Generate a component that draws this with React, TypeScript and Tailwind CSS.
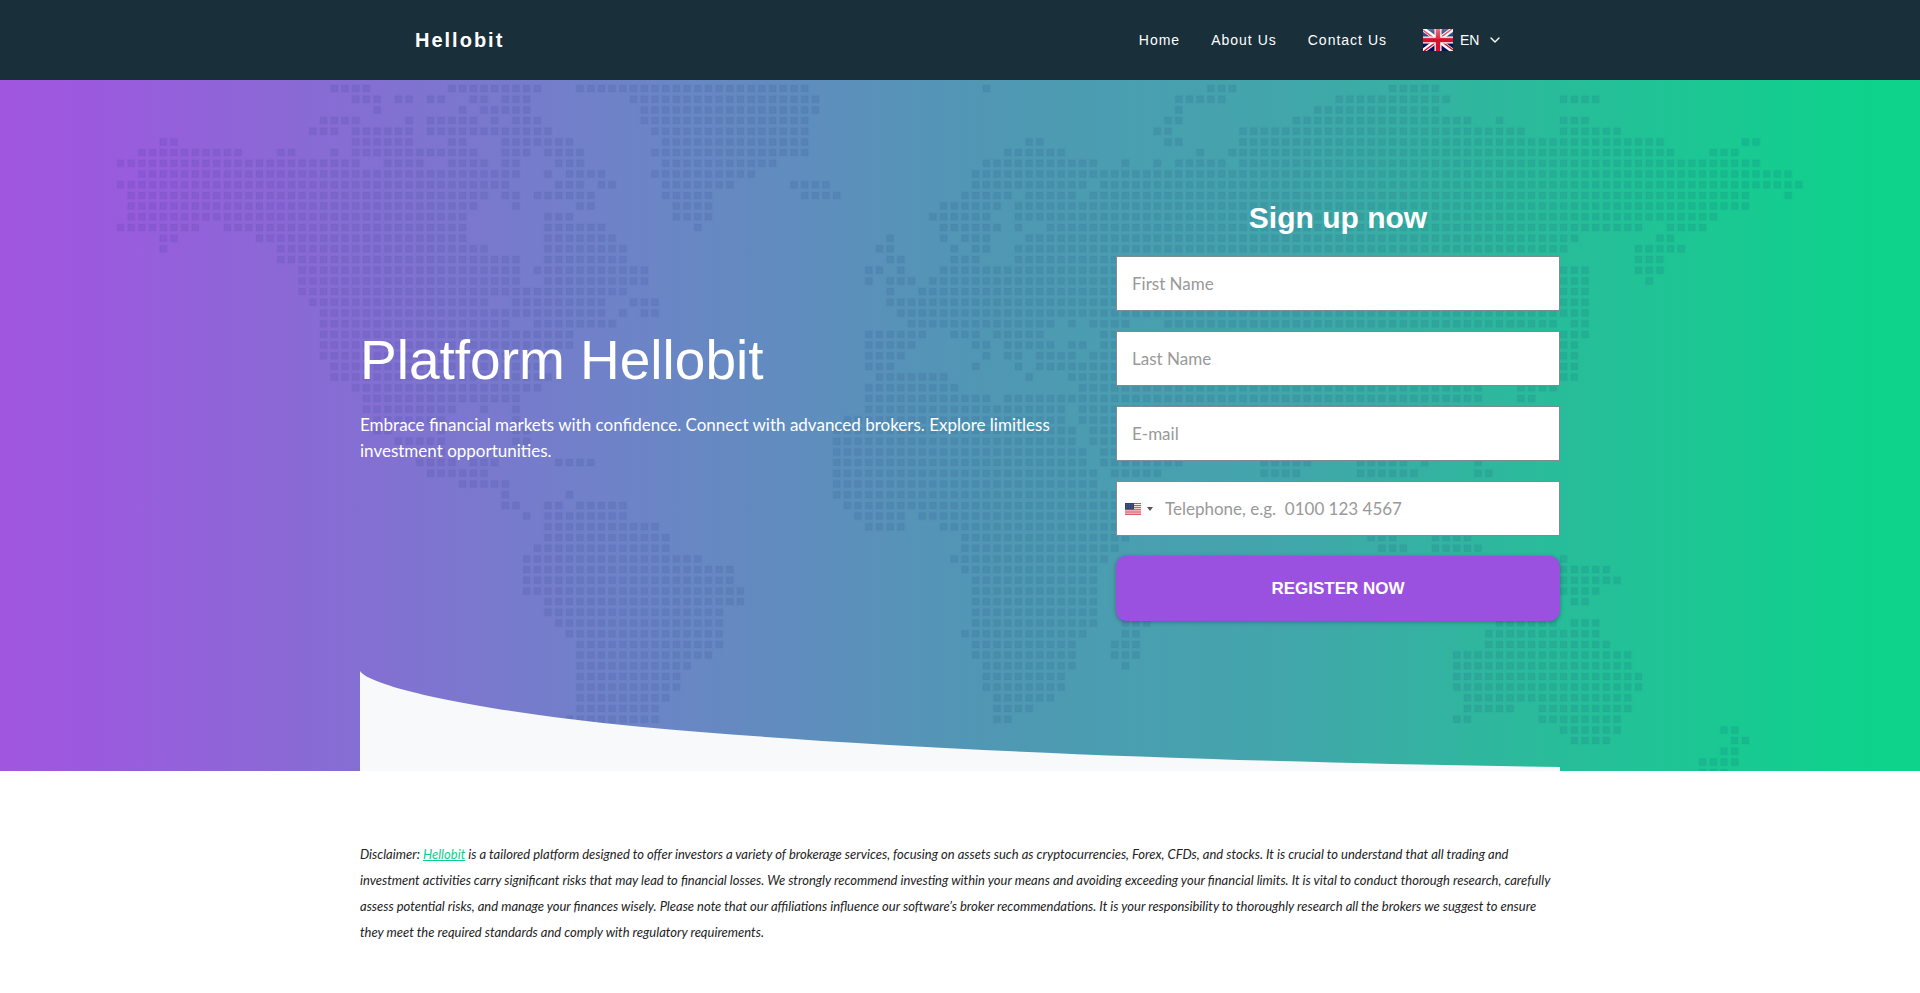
import { ChevronDown } from "lucide-react";

// Land cells of the dotted world map, one string per row, written as column ranges
const MAP_ROWS = [
  "20-23 31-39 43-64 81 102-104 119-123",
  "22-24 26-27 29-30 33-34 36-38 48-65 99-103 114-124 135-138",
  "24 32 34-38 49-65 99 112-123",
  "19-22 27 29-33 35 37-39 49-64 98-99 110-126 129 135-137",
  "18-20 22-27 29-33 34-40 50-64 97-98 105-131 135-140",
  "4-5 22-27 31-32 36-42 51-64 85-86 98-99 105-144 152-153",
  "2-11 15-16 20 22-33 36-38 40-43 50-64 83-88 101 104-145 149-151",
  "0-22 25-28 31-34 36-37 41-43 51-61 81-91 94 97 99-103 105-153",
  "2-37 40 42-45 50-59 80-156",
  "0-36 41-43 45-46 51-57 63-66 80-90 92-157",
  "1-34 36-37 39-44 51-55 64-67 79-83 85-89 91-152 156",
  "1-33 37 43-44 52-55 77-82 84-152",
  "1-32 40-42 52-55 76-81 84-149",
  "0-7 10-32 40-45 54 77-82 84 87-142 145-148",
  "4-5 13-32 40-46 72 77 79-81 85-136 144-145",
  "4 15-34 40-47 71-72 78 80-81 84-135 142-146",
  "15-37 40-47 72-73 78-80 84-134 142-144",
  "17-37 39-49 70-71 73 77-137 142-144",
  "17-37 40-49 70 72-74 76-137 143",
  "17-47 72 75-137",
  "18-34 37-45 48-50 72-137",
  "19-45 47 49-50 73-137",
  "19-36 39-46 74-87 89 91-94 98-134 136-137",
  "19-42 70-75 78-80 82-86 92-137",
  "19-42 70-74 80-81 83-87 89-90 92-136",
  "19-40 70-73 81 83-84 86-89 91-136",
  "20-39 70-72 80 84 86-136",
  "20-40 71-77 85 89-136",
  "22-39 70-78 90-127 131-134",
  "23-37 70-81 83-127 131-132",
  "23-31 34 37 70-88 90-127",
  "24-30 37 68-88 90-126",
  "24-25 30 37-38 67-89 91-125",
  "26-30 37-38 67-89 91-120",
  "27-30 67-90 92-119",
  "28-31 33-35 41-44 67-90 92-99 107-111 116-120 122 127",
  "29-34 67-91 93-97 107-110 116-121 127-128",
  "32-36 67-91",
  "36 42 67-93",
  "36-37 40-41 43-47 68-93",
  "38 40-47 69-73 75-93",
  "40-50 70-73 77-93",
  "40-51 79-94 117-119 123-126",
  "39-51 79-93 118-120 123-127",
  "38-54 78-92 135",
  "38-57 79-91 135-139",
  "38-57 80-91 135-140",
  "38-58 80-91 135-138",
  "40-58 80-91 136-137",
  "40-56 80-91",
  "41-56 80-91 94-96 129-134 136-138",
  "42-56 79-90 94-95 128-138",
  "43-56 80-89 93-95 128-139",
  "43-55 80-89 93-95 125-141",
  "43-53 81-89 94 125-141",
  "43-52 81-88 125-142",
  "43-52 81-88 125-142",
  "43-51 82-87 126-141",
  "43-50 82-85 126-130 133-141",
  "42-50 82-83 125-126 133-140",
  "135-140 150-151",
  "136-139 151-152",
  "150-151",
  "148-151",
  "148-150",
];

const CELL = 10.69;

function mapPath() {
  let d = "";
  MAP_ROWS.forEach((row, r) => {
    row.split(" ").forEach((range) => {
      const [from, to = from] = range.split("-").map(Number);
      for (let c = from; c <= to; c++) {
        const x = (117 + c * CELL).toFixed(1);
        const y = (5 + r * CELL).toFixed(1);
        d += `M${x} ${y}h7v7h-7z`;
      }
    });
  });
  return d;
}

const WORLD_MAP = mapPath();

function WorldMap() {
  return (
    <svg
      className="absolute inset-0 h-full w-full"
      viewBox="0 0 1920 691"
      preserveAspectRatio="xMidYMid slice"
      aria-hidden="true"
    >
      <path d={WORLD_MAP} fill="#0a1e6e" fillOpacity="0.09" stroke="#0a1e6e" strokeOpacity="0.02" strokeWidth="2" />
    </svg>
  );
}

function UkFlag() {
  return (
    <svg className="h-[22px] w-[30px]" viewBox="0 0 60 44" aria-hidden="true">
      <defs>
        <linearGradient id="gloss" x1="0" y1="0" x2="0" y2="1">
          <stop offset="0" stopColor="#fff" stopOpacity="0.4" />
          <stop offset="1" stopColor="#fff" stopOpacity="0.1" />
        </linearGradient>
      </defs>
      <path d="M0 0h60v44H0z" fill="#00105c" />
      <path d="M0 0l60 44M60 0L0 44" stroke="#fff" strokeWidth="9" />
      <path d="M0 2l27 20M60 42L33 22M58 0L31 20M2 44l27-20" stroke="#d8102c" strokeWidth="3" />
      <path d="M30 0v44M0 22h60" stroke="#fff" strokeWidth="14" />
      <path d="M30 0v44M0 22h60" stroke="#d8102c" strokeWidth="9" />
      <path d="M0 0h60v20H0z" fill="url(#gloss)" />
    </svg>
  );
}

function UsFlag() {
  return (
    <svg className="h-3 w-4" viewBox="0 0 16 12" aria-hidden="true">
      <path d="M0 0h16v12H0z" fill="#fbeef0" />
      <path
        d="M0 .5h16M0 2.5h16M0 4.4h16M0 6.3h16M0 8.1h16M0 9.9h16M0 11.6h16"
        stroke="#cf3a4a"
        strokeWidth="0.9"
      />
      <path d="M0 0h9v6.5H0z" fill="#33406e" />
      <path d="M1 1.5h7M1 3.2h7M1 4.9h7" stroke="#7d86a8" strokeWidth="0.5" strokeDasharray="0.7 0.9" />
    </svg>
  );
}

function Header() {
  return (
    <header className="bg-[#19303b] text-white">
      <div className="mx-auto flex h-20 max-w-[1090px] items-center justify-between pr-0.5 font-['Liberation_Sans',sans-serif] text-sm">
        <a href="#" className="text-xl font-bold tracking-[2px]">
          Hellobit
        </a>
        <nav className="flex items-center">
          <ul className="flex gap-[31px] tracking-[1px]">
            <li>
              <a href="#">Home</a>
            </li>
            <li>
              <a href="#about">About Us</a>
            </li>
            <li>
              <a href="#contact">Contact Us</a>
            </li>
          </ul>
          <label className="ml-9 flex items-center">
            <UkFlag />
            <select aria-label="Language" className="ml-[7px] appearance-none bg-transparent">
              <option>EN</option>
            </select>
            <ChevronDown className="ml-[7px] h-4 w-4" />
          </label>
        </nav>
      </div>
    </header>
  );
}

const INPUT =
  "block h-[55px] w-full border border-[#7f8c8d] bg-white px-[15px] text-[17px] text-gray-800 outline-none placeholder:text-[#999]";

function SignUpForm() {
  return (
    <form className="w-[37%]">
      <h2 className="mb-5 text-center font-['Liberation_Sans',sans-serif] text-3xl font-bold leading-9 text-white">
        Sign up now
      </h2>
      <div className="space-y-5">
        <input className={INPUT} type="text" placeholder="First Name" aria-label="First Name" />
        <input className={INPUT} type="text" placeholder="Last Name" aria-label="Last Name" />
        <input className={INPUT} type="email" placeholder="E-mail" aria-label="E-mail" />
        <div className="flex h-[55px] border border-[#7f8c8d] bg-white">
          <button type="button" aria-label="Country" className="flex items-center gap-1.5 pl-2">
            <UsFlag />
            <svg className="h-1 w-1.5" viewBox="0 0 6 4" aria-hidden="true">
              <path d="M0 0h6L3 4z" fill="#555" />
            </svg>
          </button>
          <input
            className="min-w-0 flex-1 bg-transparent pl-3 text-[17px] text-gray-800 outline-none placeholder:text-[#999]"
            type="tel"
            placeholder="Telephone, e.g.  0100 123 4567"
            aria-label="Telephone"
          />
        </div>
        <button
          type="submit"
          className="h-[65px] w-full rounded-[10px] bg-[#9b51e0] font-['Liberation_Sans',sans-serif] text-[17px] font-bold text-white shadow-[0_1px_4px_rgba(0,0,0,0.3)]"
        >
          REGISTER NOW
        </button>
      </div>
    </form>
  );
}

function Hero() {
  return (
    <section className="relative bg-[linear-gradient(90deg,#a156e0_0%,#9b5ade_5%,#6d84c7_33%,#5296b5_50%,#42a6ab_67%,#2abb9b_80%,#0dd38b_98%)]">
      <WorldMap />
      <div className="relative mx-auto max-w-[1200px]">
        <div className="flex items-center justify-between pt-[120px]">
          <div className="w-[59%] pb-7 text-white">
            <h1 className="mb-[22px] font-['Liberation_Sans',sans-serif] text-[55px] leading-[60px]">
              Platform Hellobit
            </h1>
            <p className="text-[17px] leading-[26px]">
              Embrace financial markets with confidence. Connect with advanced brokers. Explore limitless investment
              opportunities.
            </p>
          </div>
          <SignUpForm />
        </div>
        <svg
          className="mt-[50px] block h-[100px] w-full"
          viewBox="0 0 1200 100"
          preserveAspectRatio="none"
          aria-hidden="true"
        >
          <path d="M0 0C12 18 140 42.800 280 55.700C510 76.900 817 90.300 1200 96V100H0z" fill="#f7f9fb" />
        </svg>
      </div>
    </section>
  );
}

export default function App() {
  return (
    <div className="bg-white font-[Lato,sans-serif]">
      <Header />
      <main>
        <Hero />
        <section className="mx-auto max-w-[1200px] py-[70px]">
          <p className="text-[13px] italic leading-[26px] text-[#222]">
            Disclaimer:{" "}
            <a href="#" className="text-[#0dce8c] underline">
              Hellobit
            </a>{" "}
            is a tailored platform designed to offer investors a variety of brokerage services, focusing on assets such
            as cryptocurrencies, Forex, CFDs, and stocks. It is crucial to understand that all trading and investment
            activities carry significant risks that may lead to financial losses. We strongly recommend investing within
            your means and avoiding exceeding your financial limits. It is vital to conduct thorough research, carefully
            assess potential risks, and manage your finances wisely. Please note that our affiliations influence our
            software’s broker recommendations. It is your responsibility to thoroughly research all the brokers we
            suggest to ensure they meet the required standards and comply with regulatory requirements.
          </p>
        </section>
      </main>
    </div>
  );
}
